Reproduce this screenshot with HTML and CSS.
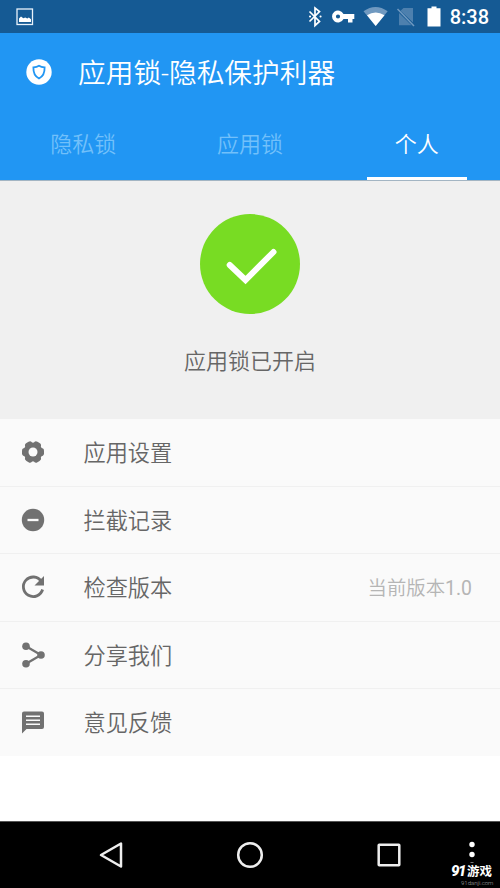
FILE: index.html
```html
<!DOCTYPE html>
<html lang="zh-CN">
<head>
<meta charset="utf-8">
<title>应用锁</title>
<link rel="stylesheet" href="styles.css">
</head>
<body>
<div class="screen">
  <div class="status">
    <svg class="status-icons" width="500" height="33" viewBox="0 0 500 33">
      <rect x="17" y="9" width="15.5" height="15.5" fill="none" stroke="#e8f2fa" stroke-width="1.3"/>
      <path d="M19 22v-3.500l2-1.900 2.300 1.600 2-.8 2 1 1.500-.8 2.200 1.700V22z" fill="#fff"/>
      <path d="M309.500 11.500l10 10-4.500 4V8l4.500 3.500-10 10" fill="none" stroke="#fff" stroke-width="1.700"/>
      <path d="M310 16.500h.1M320.500 16.500h.1" stroke="#fff" stroke-width="2" stroke-linecap="round"/>
      <path fill="#fff" fill-rule="evenodd" d="M343.500 14a6 6 0 1 0 0 5h4.500v3.600h4.500V19h1.800v-5zM338 14.400a2.100 2.100 0 1 1 0 4.200 2.100 2.100 0 0 1 0-4.200z"/>
      <path fill="#7099c0" d="M363.500 11.300Q375.500 2.500 387.700 11.300L375.700 26z"/>
      <path fill="#fff" d="M367 15.300Q375.600 9.500 384.500 15.300L375.700 26z"/>
      <path fill="#4d80ae" d="M403.500 8H413V22.500L400.500 10.800zM399 13l12.500 12.300H399z"/>
      <path d="M397.500 9l16.500 17" stroke="#7099c0" stroke-width="1.500"/>
      <path fill="#fff" d="M431.500 6.500h5v1.800h4V26.500h-13V8.300h4z"/>
    </svg>
    <span class="clock">8:38</span>
  </div>
  <header class="header">
    <div class="titlebar">
      <svg class="logo" width="26" height="26" viewBox="0 0 26 26">
        <circle cx="13" cy="13" r="12.700" fill="#fff"/>
        <path d="M13 6.700c2 1.300 3.700 1.500 5.600 1.600.2 5.200-.7 8.800-5.600 11.200-4.900-2.400-5.800-6-5.600-11.200 1.900-.1 3.600-.3 5.600-1.600z" fill="none" stroke="#2196f3" stroke-width="1.800"/>
      </svg>
      <h1 class="title">应用锁-隐私保护利器</h1>
    </div>
    <nav class="tabs">
      <span class="tab">隐私锁</span>
      <span class="tab">应用锁</span>
      <span class="tab active">个人</span>
    </nav>
  </header>
  <section class="hero">
    <svg width="100" height="100" viewBox="0 0 100 100">
      <circle cx="50" cy="50" r="50" fill="#78dc23"/>
      <path d="M29.700 51L45.500 66 73.500 38" fill="none" stroke="#fff" stroke-width="6" stroke-linecap="round"/>
    </svg>
    <p class="state">应用锁已开启</p>
  </section>
  <main class="list">
    <div class="row">
      <svg class="icon" width="24" height="28" viewBox="0 0 24 28">
        <g fill="#717171">
          <circle cx="12" cy="14" r="9.600"/>
          <rect x="1" y="10" width="22" height="8" rx="2.800"/>
          <rect x="1" y="10" width="22" height="8" rx="2.800" transform="rotate(60 12 14)"/>
          <rect x="1" y="10" width="22" height="8" rx="2.800" transform="rotate(120 12 14)"/>
        </g>
        <circle cx="12" cy="14" r="4.500" fill="#fafafa"/>
      </svg>
      <span class="label">应用设置</span>
    </div>
    <div class="row">
      <svg class="icon" width="24" height="28" viewBox="0 0 24 28">
        <circle cx="12" cy="14" r="11.200" fill="#717171"/>
        <path d="M6.500 14h11" stroke="#fafafa" stroke-width="2.300"/>
      </svg>
      <span class="label">拦截记录</span>
    </div>
    <div class="row">
      <svg class="icon" width="24" height="28" viewBox="0 0 24 28">
        <path d="M20.300 8.300A9.800 9.800 0 1 0 21.600 16.500" fill="none" stroke="#717171" stroke-width="2.800"/>
        <path d="M23 3v9.500h-9.500z" fill="#717171"/>
      </svg>
      <span class="label">检查版本</span>
      <span class="value">当前版本<span class="number">1.0</span></span>
    </div>
    <div class="row">
      <svg class="icon" width="24" height="28" viewBox="0 0 24 28">
        <path d="M5 5.300l15 8.700L5 22.700" fill="none" stroke="#717171" stroke-width="2.300"/>
        <circle cx="5" cy="5.300" r="3.800" fill="#717171"/>
        <circle cx="20" cy="14" r="3.800" fill="#717171"/>
        <circle cx="5" cy="22.700" r="3.800" fill="#717171"/>
      </svg>
      <span class="label">分享我们</span>
    </div>
    <div class="row">
      <svg class="icon" width="24" height="28" viewBox="0 0 24 28">
        <path d="M3 2.500h18a2 2 0 0 1 2 2V18a2 2 0 0 1-2 2H5.500L1 24.500v-20a2 2 0 0 1 2-2z" fill="#717171"/>
        <path d="M5 7.200h14M5 11.200h14M5 15.200h14" stroke="#fafafa" stroke-width="1.600"/>
      </svg>
      <span class="label">意见反馈</span>
    </div>
  </main>
  <footer class="navbar">
    <svg class="navkey" width="26" height="28" viewBox="0 0 26 28"><path d="M23 2.500v23L3 14z" fill="none" stroke="#eee" stroke-width="2.500" stroke-linejoin="round"/></svg>
    <svg class="navkey" width="28" height="28" viewBox="0 0 28 28"><circle cx="14" cy="14" r="11.800" fill="none" stroke="#eee" stroke-width="2.500"/></svg>
    <svg class="navkey" width="26" height="28" viewBox="0 0 26 28"><rect x="2.700" y="3.700" width="20.600" height="20.600" rx=".5" fill="none" stroke="#eee" stroke-width="2.500"/></svg>
    <div class="corner">
      <svg width="8" height="22" viewBox="0 0 8 22"><circle cx="4" cy="3.500" r="2.700" fill="#fff"/><circle cx="4" cy="13.500" r="2.700" fill="#fff"/><path d="M2.500 21.500h3" stroke="#777"/></svg>
      <div class="brand"><i class="brand-num">91</i><b class="brand-name">游戏</b></div>
      <div class="brand-url">91danji.com</div>
    </div>
  </footer>
</div>
</body>
</html>
```

FILE: styles.css
```css
* { box-sizing: border-box; }
body {
  margin: 0;
  background: #fff;
  font-family: Roboto, "Noto Sans CJK SC", sans-serif;
  font-weight: 350;
}
.screen {
  width: 500px;
  height: 888px;
  display: flex;
  flex-direction: column;
  overflow: hidden;
}
.status {
  position: relative;
  height: 33px;
  flex: none;
  display: flex;
  align-items: center;
  justify-content: flex-end;
  padding: 1px 11px 0 0;
  background: #155a94;
}
.status-icons { position: absolute; left: 0; top: 0; }
.clock { color: #fff; font-size: 20px; font-weight: 500; line-height: 30px; }
.header {
  height: 148px;
  flex: none;
  background: #2196f3;
  color: #fff;
  border-bottom: 1px solid #a3b5c3;
}
.titlebar {
  display: flex;
  align-items: center;
  height: 77px;
  padding-left: 26px;
}
.logo { flex: none; }
.title {
  margin: 0 0 0 26px;
  padding-top: 5px;
  font-size: 27.700px;
  font-weight: 350;
  line-height: 40px;
  white-space: nowrap;
}
.tabs { display: grid; grid-template-columns: repeat(3, 1fr); height: 70px; }
.tab {
  height: 70px;
  line-height: 69px;
  text-align: center;
  font-size: 22px;
  color: #72c0fa;
}
.tab.active {
  justify-self: center;
  width: 100px;
  color: #fff;
  border-bottom: 3px solid #fff;
}
.hero {
  height: 238px;
  flex: none;
  display: flex;
  flex-direction: column;
  align-items: center;
  padding-top: 32.500px;
  background: #f0f0f0;
}
.state { margin: 32px 0 0; font-size: 22px; line-height: 32px; color: #666; }
.list { height: 337px; flex: none; background: #fafafa; }
.row {
  height: 67.500px;
  display: flex;
  align-items: center;
  padding: 0 28px 0 21px;
  border-bottom: 1px solid #f0f0f0;
}
.row:last-child { border-bottom: 0; }
.icon { flex: none; }
.label { margin-left: 38.500px; padding-top: 2px; font-size: 22.200px; line-height: 32px; color: #666; }
.row:last-child .label { padding-top: 1px; }
.value { margin-left: auto; padding-bottom: 1px; font-size: 19.400px; color: #b5b5b5; }
.number { font-weight: 400; }
.navbar {
  height: 67px;
  margin-top: auto;
  flex: none;
  display: grid;
  grid-template-columns: 42px 138px 140px 138px 42px;
  align-items: center;
  background: #000;
  border-top: 1px solid #555;
}
.navkey { justify-self: center; }
.navkey:first-child { grid-column: 2; }
.corner {
  position: absolute;
  left: 444px;
  top: 841px;
  width: 56px;
  color: #fff;
}
.corner svg { display: block; margin-left: 24px; }
.brand {
  display: flex;
  align-items: center;
  margin: 1px 0 0 7px;
  height: 15px;
  font-size: 15px;
  line-height: 15px;
}
.brand-num { width: 16px; font-weight: 900; letter-spacing: -1.500px; }
.brand-name { font-weight: 700; font-size: 12.500px; }
.brand-url { margin-left: 17px; font-size: 6px; line-height: 8px; color: #aaa; }
```
